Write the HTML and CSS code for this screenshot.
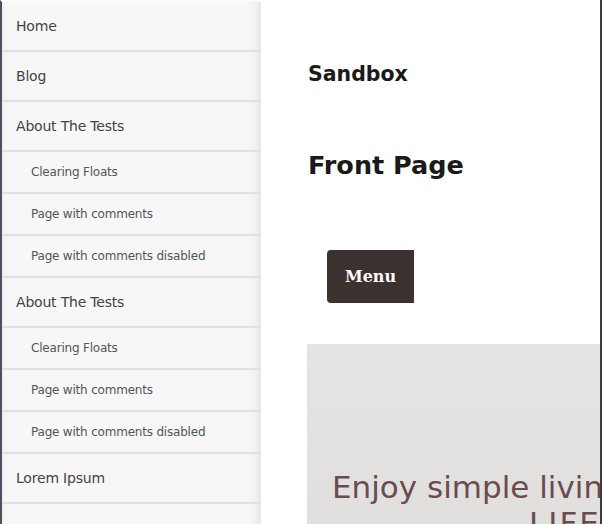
FILE: index.html
```html
<!DOCTYPE html>
<html lang="en">
<head>
    <meta charset="UTF-8">
    <meta name="viewport" content="width=device-width, initial-scale=1.0">
    <title>Sandbox</title>
    <link rel="stylesheet" href="styles.css">
</head>
<body>

    <!-- Menu lateral -->
    <nav class="side-menu">
        <ul>
            <li><a href="#">Home</a></li>
            <li><a href="#">Blog</a></li>
            <li><a href="#">About The Tests</a></li>
            <li class="sub"><a href="#">Clearing Floats</a></li>
            <li class="sub"><a href="#">Page with comments</a></li>
            <li class="sub"><a href="#">Page with comments disabled</a></li>
            <li><a href="#">About The Tests</a></li>
            <li class="sub"><a href="#">Clearing Floats</a></li>
            <li class="sub"><a href="#">Page with comments</a></li>
            <li class="sub"><a href="#">Page with comments disabled</a></li>
            <li><a href="#">Lorem Ipsum</a></li>
            <li><a href="#">&nbsp;</a></li>
        </ul>
    </nav>

    <!-- Conteúdo -->
    <div class="page">
        <header class="site-header">
            <p class="site-title">Sandbox</p>
            <h1 class="page-title">Front Page</h1>
            <button class="menu-toggle">Menu</button>
        </header>

        <section class="hero">
            <h2>
                <span class="hero-line">Enjoy simple living</span>
                <span class="hero-line hero-big">LIFE</span>
            </h2>
        </section>
    </div>

</body>
</html>
```

FILE: styles.css
```css
body {
    margin: 0;
    padding: 0;
    display: flex;
    height: 524px;
    overflow: hidden;
    background-color: #fff;
}

.side-menu {
    width: 259px;
    flex-shrink: 0;
    border-left: 2px solid #4b505a;
    border-top: 2px solid #fbfbfb;
    background-color: #f7f7f7;
    font-family: "DejaVu Sans", Verdana, sans-serif;
}

.side-menu ul {
    list-style: none;
    margin: 0;
    padding: 0;
}

.side-menu li {
    border-bottom: 2px solid #e1e1e1;
    box-shadow: inset -10px 0 8px -6px rgba(0, 0, 0, 0.08), inset 6px 0 6px -5px rgba(0, 0, 0, 0.05);
}

.side-menu a {
    display: block;
    height: 48px;
    line-height: 49px;
    padding-left: 14px;
    font-size: 14px;
    color: #444;
    text-decoration: none;
    letter-spacing: -0.2px;
}

.side-menu .sub a {
    height: 40px;
    line-height: 41px;
    padding-left: 29px;
    font-size: 12px;
    color: #555;
}

.page {
    flex: 1;
    min-width: 0;
    border-right: 2px solid #3a3a3a;
    padding-left: 47px;
    font-family: "DejaVu Sans", sans-serif;
    overflow: hidden;
}

.site-header {
    padding-top: 62px;
}

.site-title {
    margin: 0;
    font-size: 20.5px;
    font-weight: bold;
    color: #1a1a1a;
    line-height: 24px;
}

.page-title {
    margin: 63px 0 0 0;
    font-size: 25.5px;
    font-weight: bold;
    color: #1a1a1a;
    line-height: 32px;
}

.menu-toggle {
    margin: 69px 0 0 19px;
    width: 87px;
    height: 53px;
    border: none;
    border-radius: 4px 0 0 4px;
    background-color: #3b312e;
    color: #fff;
    font-family: "DejaVu Serif", "Liberation Serif", serif;
    font-size: 16px;
    font-weight: bold;
    cursor: pointer;
}

.hero {
    margin-top: 41px;
    margin-left: -1px;
    height: 200px;
    background: linear-gradient(180deg, #e6e4e2 0%, #e1dfdd 100%);
    overflow: hidden;
}

.hero h2 {
    margin: 0;
    padding-top: 125px;
    font-size: 31px;
    font-weight: normal;
    color: #6b4b50;
    line-height: 36px;
    white-space: nowrap;
}

.hero-line {
    display: block;
    padding-left: 25px;
}

.hero-big {
    padding-left: 222px;
    letter-spacing: 2px;
}
```
